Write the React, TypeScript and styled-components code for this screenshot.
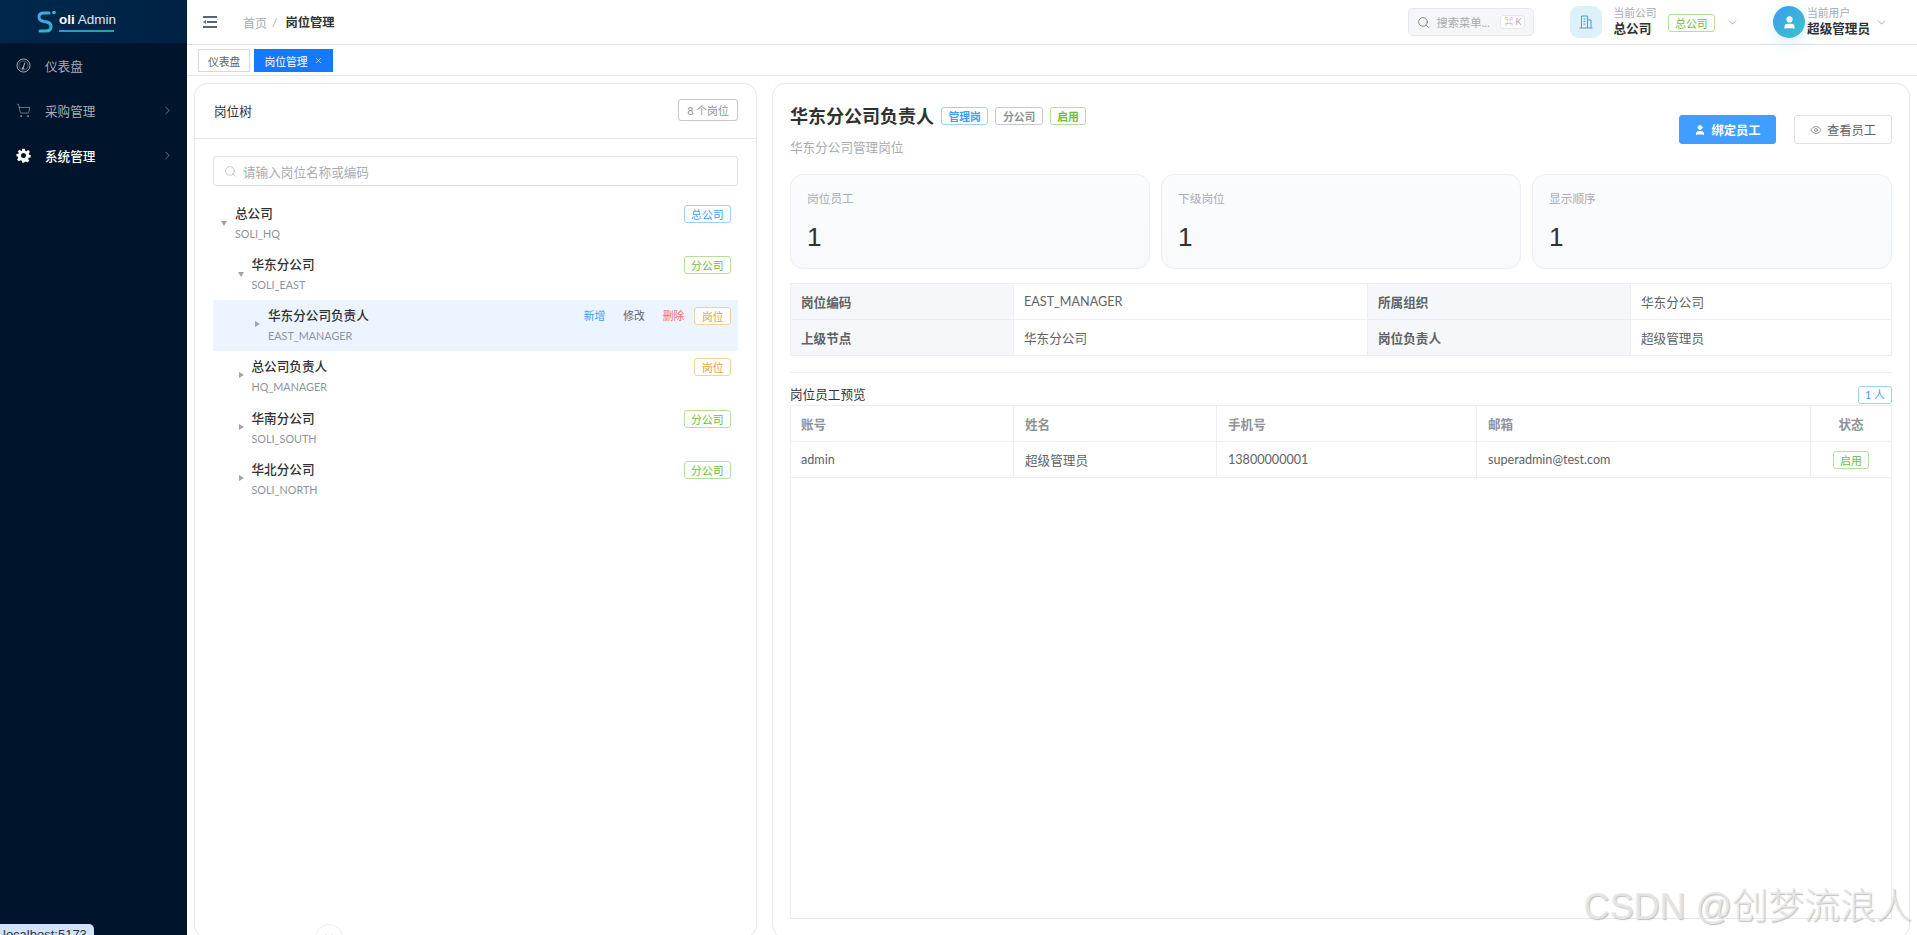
import React from "react";
import styled, { createGlobalStyle } from "styled-components";
import { ChevronDown, ChevronRight, ChevronsDown, Eye, Search, ShoppingCart, User, X } from "lucide-react";

const FONT = `"Lato", "Noto Sans CJK SC", sans-serif`;

const Global = createGlobalStyle`
  html, body { margin: 0; padding: 0; height: 100%; overflow: hidden; background: #fff; }
  body { font-family: ${FONT}; color: #303133; }
  * { box-sizing: border-box; }
`;

const Shell = styled.div`
  position: relative;
  display: flex;
  width: 100vw;
  height: 100vh;
  overflow: hidden;
`;

const Sidebar = styled.aside`
  flex: 0 0 187px;
  background: #00152b;
  display: flex;
  flex-direction: column;
`;

const Brand = styled.div`
  height: 43px;
  background: linear-gradient(90deg, #00284c, #002244);
  display: flex;
  align-items: center;
  padding-left: 37px;
`;

const BrandText = styled.div`
  position: relative;
  margin-left: 2px;
  color: #dfe9f5;
  font-size: 13.5px;
  line-height: 18px;
  padding-bottom: 4px;
  font-family: "Liberation Sans", sans-serif;
  &::after {
    content: "";
    position: absolute;
    left: 0;
    right: 2px;
    bottom: 1px;
    height: 2px;
    background: linear-gradient(90deg, #3a8ee6, #26a69a);
  }
  b { color: #fff; }
`;

const Menu = styled.nav`
  display: flex;
  flex-direction: column;
`;

const MenuItem = styled.div<{ $active?: boolean }>`
  height: 45px;
  display: flex;
  align-items: center;
  padding: 0 13px 0 16px;
  gap: 14px;
  font-size: 12.6px;
  color: ${(p) => (p.$active ? "#ffffff" : "#a6adb5")};
  font-weight: ${(p) => (p.$active ? 500 : 400)};
  svg { flex: none; }
  span { flex: 1; }
`;

const Main = styled.main`
  flex: 1;
  min-width: 0;
  display: flex;
  flex-direction: column;
`;

const Header = styled.header`
  height: 45px;
  flex: none;
  border-bottom: 1px solid #dcdfe6;
  display: flex;
  align-items: center;
  padding: 0 0 0 16px;
  background: #fff;
`;

const Crumbs = styled.div`
  margin-left: 26px;
  display: flex;
  align-items: center;
  font-size: 12px;
  color: #a8abb2;
  gap: 5px;
  b { color: #303133; font-size: 12.3px; font-weight: 600; margin-left: 3px; }
`;

const Spacer = styled.div`
  flex: 1;
`;

const SearchBox = styled.div`
  width: 126px;
  height: 28px;
  border: 1px solid #e4e7ed;
  border-radius: 5px;
  background: #f5f6f8;
  display: flex;
  align-items: center;
  padding: 0 8px;
  gap: 6px;
  color: #a8abb2;
  font-size: 11.3px;
  svg { color: #606266; flex: none; }
  span { white-space: nowrap; }
`;

const Kbd = styled.span`
  border: 1px solid #e4e7ed;
  border-radius: 3px;
  background: #fff;
  color: #a8abb2;
  font-size: 9px;
  line-height: 12px;
  padding: 0 3px;
  margin-left: auto;
`;

const CompanyBlock = styled.div`
  margin-left: 36px;
  display: flex;
  align-items: center;
  gap: 11px;
`;

const CompanyIcon = styled.div`
  width: 32px;
  height: 32px;
  border-radius: 9px;
  background: #dcf1f9;
  display: flex;
  align-items: center;
  justify-content: center;
  color: #409eff;
`;

const Stack = styled.div`
  display: flex;
  flex-direction: column;
  small { font-size: 10.8px; line-height: 14px; color: #a8abb2; }
  strong { font-size: 12.6px; line-height: 18px; font-weight: 600; color: #303133; white-space: nowrap; }
`;

const Chevron = styled(ChevronDown)`
  color: #808389;
`;

const UserBlock = styled.div`
  margin-left: 34px;
  margin-right: 29px;
  display: flex;
  align-items: center;
  gap: 2px;
`;

const Avatar = styled.div`
  width: 32px;
  height: 32px;
  border-radius: 50%;
  background: linear-gradient(135deg, #3f9bf0, #36c6c8);
  box-shadow: 0 6px 16px rgba(64, 158, 255, 0.18);
  display: flex;
  align-items: center;
  justify-content: center;
  color: #fff;
`;

const TabBar = styled.div`
  height: 31px;
  flex: none;
  border-bottom: 1px solid #e4e7ed;
  display: flex;
  align-items: flex-start;
  gap: 4px;
  padding: 4px 0 0 11px;
`;

const Tab = styled.div<{ $active?: boolean }>`
  height: 23px;
  display: flex;
  align-items: center;
  gap: 6px;
  padding: 0 9px;
  font-size: 10.8px;
  border: 1px solid ${(p) => (p.$active ? "#1677ff" : "#d9d9d9")};
  background: ${(p) => (p.$active ? "#1677ff" : "#fff")};
  color: ${(p) => (p.$active ? "#fff" : "#606266")};
`;

const Content = styled.div`
  flex: 1;
  min-height: 0;
  display: flex;
  gap: 15px;
  padding: 7px 7px 0;
`;

const Card = styled.section`
  background: #fff;
  border: 1px solid #e4e7ed;
  border-radius: 13px;
  min-height: 0;
  margin-bottom: -3px;
`;

const TreeCard = styled(Card)`
  position: relative;
  flex: 0 0 563px;
  display: flex;
  flex-direction: column;
`;

const TreeHead = styled.div`
  height: 55px;
  flex: none;
  border-bottom: 1px solid #e4e7ed;
  display: flex;
  align-items: center;
  justify-content: space-between;
  padding: 0 18px 2px 19px;
  font-size: 12.6px;
  font-weight: 400;
  color: #303133;
`;

const CountBadge = styled.span`
  height: 22px;
  width: 60px;
  border: 1px solid #c8c9cc;
  border-radius: 3px;
  color: #909399;
  font-size: 10.8px;
  font-weight: 400;
  display: flex;
  align-items: center;
  justify-content: center;
`;

const TreeBody = styled.div`
  padding: 17px 18px 0 18px;
  display: flex;
  flex-direction: column;
`;

const SearchInput = styled.div`
  height: 30px;
  border: 1px solid #dcdfe6;
  border-radius: 3px;
  display: flex;
  align-items: center;
  gap: 6px;
  padding: 0 10px;
  color: #a8abb2;
  font-size: 12.6px;
  margin-bottom: 11.5px;
`;

const Row = styled.div<{ $level: number; $selected?: boolean }>`
  height: 51.3px;
  flex: none;
  display: flex;
  align-items: flex-start;
  padding: 6px 7px 6px ${(p) => 8 + p.$level * 16.5}px;
  background: ${(p) => (p.$selected ? "#ecf5ff" : "transparent")};
`;

const Caret = styled.span<{ $open?: boolean }>`
  flex: none;
  width: 0;
  height: 0;
  ${(p) =>
    p.$open
      ? `border-left: 3.5px solid transparent; border-right: 3.5px solid transparent; border-top: 5px solid #a0a3a8; margin: 17px 8px 0 0;`
      : `border-top: 3.5px solid transparent; border-bottom: 3.5px solid transparent; border-left: 5px solid #a0a3a8; margin: 15px 8px 0 1px;`}
`;

const RowText = styled.div`
  flex: 1;
  min-width: 0;
  display: flex;
  flex-direction: column;
  b { font-size: 12.6px; line-height: 20px; font-weight: 500; color: #303133; }
  small { font-size: 10.8px; line-height: 20px; color: #909399; }
`;

const RowActions = styled.div`
  display: flex;
  gap: 18px;
  margin-right: 10px;
`;

const RowAction = styled.span<{ $color: string }>`
  font-size: 10.8px;
  line-height: 20px;
  color: ${(p) => p.$color};
`;

const Tag = styled.span<{ $tone: "blue" | "green" | "orange" | "gray"; $strong?: boolean }>`
  flex: none;
  display: inline-flex;
  align-items: center;
  justify-content: center;
  height: 18px;
  padding: 0 6.5px;
  border-radius: 3px;
  font-size: 10.8px;
  font-weight: ${(p) => (p.$strong ? 600 : 400)};
  margin-top: 1px;
  background: #fff;
  color: ${(p) =>
    ({ blue: "#409eff", green: "#67c23a", orange: "#e6a23c", gray: "#909399" })[p.$tone]};
  border: 1px solid
    ${(p) => ({ blue: "#a0cfff", green: "#b3e19d", orange: "#f3d19e", gray: "#c8c9cc" })[p.$tone]};
`;

const CollapseDot = styled.div`
  position: absolute;
  left: 120px;
  bottom: -15px;
  width: 28px;
  height: 28px;
  border-radius: 50%;
  background: #fff;
  border: 1px solid #eceef2;
  color: #606266;
  display: flex;
  justify-content: center;
  padding-top: 7px;
`;

const DetailCard = styled(Card)`
  flex: 1;
  min-width: 0;
  display: flex;
  flex-direction: column;
  padding: 16px 17px 18px 17px;
`;

const DetailHead = styled.div`
  display: flex;
  justify-content: space-between;
  align-items: flex-start;
  height: 74px;
  flex: none;
`;

const TitleRow = styled.div`
  display: flex;
  align-items: center;
  gap: 7px;
  height: 30px;
  h1 { margin: 0; font-size: 18px; font-weight: 700; color: #303133; }
`;

const Subtitle = styled.div`
  margin-top: 8px;
  font-size: 12.6px;
  line-height: 20px;
  color: #a8abb2;
`;

const Buttons = styled.div`
  display: flex;
  gap: 18px;
  margin-top: 15px;
`;

const Button = styled.div<{ $primary?: boolean }>`
  width: ${(p) => (p.$primary ? "97px" : "98px")};
  height: 29px;
  border-radius: 3px;
  display: flex;
  align-items: center;
  justify-content: center;
  gap: 5px;
  font-size: 12.3px;
  font-weight: ${(p) => (p.$primary ? 600 : 400)};
  color: ${(p) => (p.$primary ? "#fff" : "#606266")};
  background: ${(p) => (p.$primary ? "#409eff" : "#fff")};
  border: 1px solid ${(p) => (p.$primary ? "#409eff" : "#dcdfe6")};
`;

const Stats = styled.div`
  display: grid;
  grid-template-columns: repeat(3, 1fr);
  gap: 11px;
  flex: none;
`;

const StatCard = styled.div`
  height: 95px;
  border: 1px solid #ebeef5;
  border-radius: 13px;
  background: linear-gradient(180deg, #fbfcfe, #f8f9fb);
  padding: 14px 16px;
  small { display: block; font-size: 11.7px; line-height: 18px; color: #a8abb2; }
  strong {
    display: block;
    margin-top: 15px;
    font-family: "Liberation Sans", sans-serif;
    font-size: 26px;
    line-height: 30px;
    font-weight: 400;
    color: #303133;
  }
`;

const InfoGrid = styled.div`
  flex: none;
  margin-top: 14px;
  display: grid;
  grid-template-columns: 223px 354px 263px 1fr;
  border-top: 1px solid #ebeef5;
  border-left: 1px solid #ebeef5;
`;

const InfoCell = styled.div<{ $label?: boolean }>`
  height: 36px;
  border-right: 1px solid #ebeef5;
  border-bottom: 1px solid #ebeef5;
  display: flex;
  align-items: center;
  padding: 0 10px 1px;
  font-size: 12.6px;
  font-weight: ${(p) => (p.$label ? 700 : 400)};
  color: #606266;
  background: ${(p) => (p.$label ? "#f5f7fa" : "#fff")};
`;

const Divider = styled.div`
  flex: none;
  height: 1px;
  background: #ebeef5;
  margin: 16px 0 13px;
`;

const PreviewHead = styled.div`
  flex: none;
  height: 18px;
  display: flex;
  align-items: center;
  justify-content: space-between;
  font-size: 12.6px;
  font-weight: 400;
  line-height: 14px;
  color: #303133;
`;

const CountTag = styled(Tag)`
  width: 34px;
  padding: 0;
  margin-top: 0;
  height: 18px;
`;

const TableFrame = styled.div`
  flex: 1;
  min-height: 0;
  margin-top: 1px;
  border: 1px solid #ebeef5;
  border-bottom: 1px solid #e4e7ed;
`;

const TableRow = styled.div`
  display: grid;
  grid-template-columns: 223px 203px 260px 334px 1fr;
  height: 36px;
  border-bottom: 1px solid #ebeef5;
`;

const Cell = styled.div<{ $head?: boolean; $center?: boolean }>`
  display: flex;
  align-items: center;
  justify-content: ${(p) => (p.$center ? "center" : "flex-start")};
  padding: 0 11px 1px;
  font-size: 12.6px;
  font-weight: ${(p) => (p.$head ? 600 : 400)};
  color: ${(p) => (p.$head ? "#909399" : "#606266")};
  border-right: 1px solid #ebeef5;
  &:first-child { padding-left: 10px; }
  &:last-child { border-right: none; }
`;

const StatusBubble = styled.div`
  position: absolute;
  left: 0;
  bottom: -13px;
  height: 24px;
  padding: 0 7px 0 3px;
  background: #d3e3fd;
  border-top-right-radius: 5px;
  color: #303133;
  font-size: 13px;
  line-height: 22px;
  font-family: "Liberation Sans", sans-serif;
`;

const Watermark = styled.div`
  position: absolute;
  right: 5px;
  bottom: 6px;
  font-family: "Liberation Sans", "Noto Sans CJK SC", sans-serif;
  font-size: 36px;
  line-height: 44px;
  font-weight: 300;
  color: rgba(232, 232, 232, 0.9);
  text-shadow: 1px 1px 1px rgba(165, 165, 165, 0.7);
  pointer-events: none;
  white-space: nowrap;
`;

const Logo = () => (
  <svg width="20" height="24" viewBox="0 0 20 24">
    <defs>
      <linearGradient id="lg" x1="0" y1="0" x2="1" y2="1">
        <stop offset="0" stopColor="#42a5f5" />
        <stop offset="1" stopColor="#2bb5c9" />
      </linearGradient>
    </defs>
    <path
      d="M12 3 H6.5 C3 3 2 5 2 7 C2 10 4 11 7 11.5 C10.5 12 14 12.5 14 16.5 C14 19.5 12 21 9 21 H3"
      fill="none"
      stroke="url(#lg)"
      strokeWidth="3"
      strokeLinecap="round"
    />
    <circle cx="17" cy="2.5" r="1.8" fill="#26c6c6" />
  </svg>
);

const GaugeIcon = () => (
  <svg width="15" height="15" viewBox="0 0 16 16" fill="none" stroke="currentColor" strokeWidth="1">
    <circle cx="8" cy="8" r="7" />
    <circle cx="8" cy="8" r="5" strokeOpacity="0.55" />
    <path d="M9.5 5 L7.6 10.5" strokeWidth="1.2" />
    <circle cx="7.4" cy="11" r="0.9" fill="currentColor" />
  </svg>
);

const GearIcon = () => (
  <svg width="15" height="15" viewBox="0 0 24 24" fill="#fff">
    <path
      fillRule="evenodd"
      d="M10 1h4l.7 3.2 1.9.8 2.8-1.8 2.8 2.8-1.8 2.8.8 1.9L23.4 11v4l-3.2.7-.8 1.9 1.8 2.8-2.8 2.8-2.8-1.8-1.9.8L13 23.4h-3l-.7-3.2-1.9-.8-2.8 1.8-2.8-2.8 1.8-2.8-.8-1.9L.6 13v-3l3.2-.7.8-1.9L2.8 5.6 5.6 2.8l2.8 1.8 1-.4zM12 8a4 4 0 1 0 0 8 4 4 0 0 0 0-8z"
    />
  </svg>
);

const FoldIcon = () => (
  <svg width="14" height="12" viewBox="0 0 14 12" fill="#5a6478">
    <rect x="0" y="0" width="14" height="2" />
    <rect x="4" y="5" width="10" height="2" />
    <rect x="0" y="10" width="14" height="2" />
    <path d="M0 6 L3 4 V8 Z" />
  </svg>
);

const BuildingIcon = () => (
  <svg width="14" height="14" viewBox="0 0 14 14" fill="none" stroke="currentColor" strokeWidth="1">
    <path d="M2.5 13 V1 H8.5 V13 M8.5 5 H12 V13 M0.5 13 H13.5 M4.5 4 H6.5 M4.5 6.5 H6.5 M4.5 9 H6.5" />
  </svg>
);

type TreeNode = {
  level: number;
  name: string;
  code: string;
  open?: boolean;
  tag: string;
  tone: "blue" | "green" | "orange";
  selected?: boolean;
};

const nodes: TreeNode[] = [
  { level: 0, name: "总公司", code: "SOLI_HQ", open: true, tag: "总公司", tone: "blue" },
  { level: 1, name: "华东分公司", code: "SOLI_EAST", open: true, tag: "分公司", tone: "green" },
  { level: 2, name: "华东分公司负责人", code: "EAST_MANAGER", tag: "岗位", tone: "orange", selected: true },
  { level: 1, name: "总公司负责人", code: "HQ_MANAGER", tag: "岗位", tone: "orange" },
  { level: 1, name: "华南分公司", code: "SOLI_SOUTH", tag: "分公司", tone: "green" },
  { level: 1, name: "华北分公司", code: "SOLI_NORTH", tag: "分公司", tone: "green" },
];

export default function App() {
  return (
    <Shell>
      <Global />
      <Sidebar>
        <Brand>
          <Logo />
          <BrandText>
            <b>oli</b> Admin
          </BrandText>
        </Brand>
        <Menu>
          <MenuItem>
            <GaugeIcon />
            <span>仪表盘</span>
          </MenuItem>
          <MenuItem>
            <ShoppingCart size={15} strokeWidth={1} />
            <span>采购管理</span>
            <ChevronRight size={13} strokeWidth={1.2} />
          </MenuItem>
          <MenuItem $active>
            <GearIcon />
            <span>系统管理</span>
            <ChevronRight size={13} strokeWidth={1.2} color="#a6adb5" />
          </MenuItem>
        </Menu>
      </Sidebar>
      <Main>
        <Header>
          <FoldIcon />
          <Crumbs>
            首页 <span>/</span>
            <b>岗位管理</b>
          </Crumbs>
          <Spacer />
          <SearchBox>
            <Search size={13} strokeWidth={1.3} />
            <span>搜索菜单...</span>
            <Kbd>⌘ K</Kbd>
          </SearchBox>
          <CompanyBlock>
            <CompanyIcon>
              <BuildingIcon />
            </CompanyIcon>
            <Stack>
              <small>当前公司</small>
              <strong>总公司</strong>
            </Stack>
            <Tag $tone="green">总公司</Tag>
            <Chevron size={13} strokeWidth={1.2} />
          </CompanyBlock>
          <UserBlock>
            <Avatar>
              <User size={15} fill="#fff" strokeWidth={2} />
            </Avatar>
            <Stack>
              <small>当前用户</small>
              <strong>超级管理员</strong>
            </Stack>
            <Chevron size={13} strokeWidth={1.2} style={{ marginLeft: 3 }} />
          </UserBlock>
        </Header>
        <TabBar>
          <Tab>仪表盘</Tab>
          <Tab $active>
            岗位管理 <X size={9} strokeWidth={1.5} />
          </Tab>
        </TabBar>
        <Content>
          <TreeCard>
            <TreeHead>
              岗位树
              <CountBadge>8 个岗位</CountBadge>
            </TreeHead>
            <TreeBody>
              <SearchInput>
                <Search size={13} strokeWidth={1.2} />
                请输入岗位名称或编码
              </SearchInput>
              {nodes.map((n) => (
                <Row key={n.code} $level={n.level} $selected={n.selected}>
                  <Caret $open={n.open} />
                  <RowText>
                    <b>{n.name}</b>
                    <small>{n.code}</small>
                  </RowText>
                  {n.selected && (
                    <RowActions>
                      <RowAction $color="#409eff">新增</RowAction>
                      <RowAction $color="#606266">修改</RowAction>
                      <RowAction $color="#f56c6c">删除</RowAction>
                    </RowActions>
                  )}
                  <Tag $tone={n.tone}>{n.tag}</Tag>
                </Row>
              ))}
            </TreeBody>
            <CollapseDot>
              <ChevronsDown size={12} strokeWidth={2} />
            </CollapseDot>
          </TreeCard>
          <DetailCard>
            <DetailHead>
              <div>
                <TitleRow>
                  <h1>华东分公司负责人</h1>
                  <Tag $tone="blue" $strong>管理岗</Tag>
                  <Tag $tone="gray" $strong>分公司</Tag>
                  <Tag $tone="green" $strong>启用</Tag>
                </TitleRow>
                <Subtitle>华东分公司管理岗位</Subtitle>
              </div>
              <Buttons>
                <Button $primary>
                  <User size={12} fill="#fff" strokeWidth={2} />
                  绑定员工
                </Button>
                <Button>
                  <Eye size={12} strokeWidth={1.3} />
                  查看员工
                </Button>
              </Buttons>
            </DetailHead>
            <Stats>
              <StatCard>
                <small>岗位员工</small>
                <strong>1</strong>
              </StatCard>
              <StatCard>
                <small>下级岗位</small>
                <strong>1</strong>
              </StatCard>
              <StatCard>
                <small>显示顺序</small>
                <strong>1</strong>
              </StatCard>
            </Stats>
            <InfoGrid>
              <InfoCell $label>岗位编码</InfoCell>
              <InfoCell>EAST_MANAGER</InfoCell>
              <InfoCell $label>所属组织</InfoCell>
              <InfoCell>华东分公司</InfoCell>
              <InfoCell $label>上级节点</InfoCell>
              <InfoCell>华东分公司</InfoCell>
              <InfoCell $label>岗位负责人</InfoCell>
              <InfoCell>超级管理员</InfoCell>
            </InfoGrid>
            <Divider />
            <PreviewHead>
              岗位员工预览
              <CountTag $tone="blue">1 人</CountTag>
            </PreviewHead>
            <TableFrame>
              <TableRow>
                <Cell $head>账号</Cell>
                <Cell $head>姓名</Cell>
                <Cell $head>手机号</Cell>
                <Cell $head>邮箱</Cell>
                <Cell $head $center>状态</Cell>
              </TableRow>
              <TableRow>
                <Cell>admin</Cell>
                <Cell>超级管理员</Cell>
                <Cell>13800000001</Cell>
                <Cell>superadmin@test.com</Cell>
                <Cell $center>
                  <Tag $tone="green">启用</Tag>
                </Cell>
              </TableRow>
            </TableFrame>
          </DetailCard>
        </Content>
      </Main>
      <StatusBubble>localhost:5173</StatusBubble>
      <Watermark>CSDN @创梦流浪人</Watermark>
    </Shell>
  );
}
